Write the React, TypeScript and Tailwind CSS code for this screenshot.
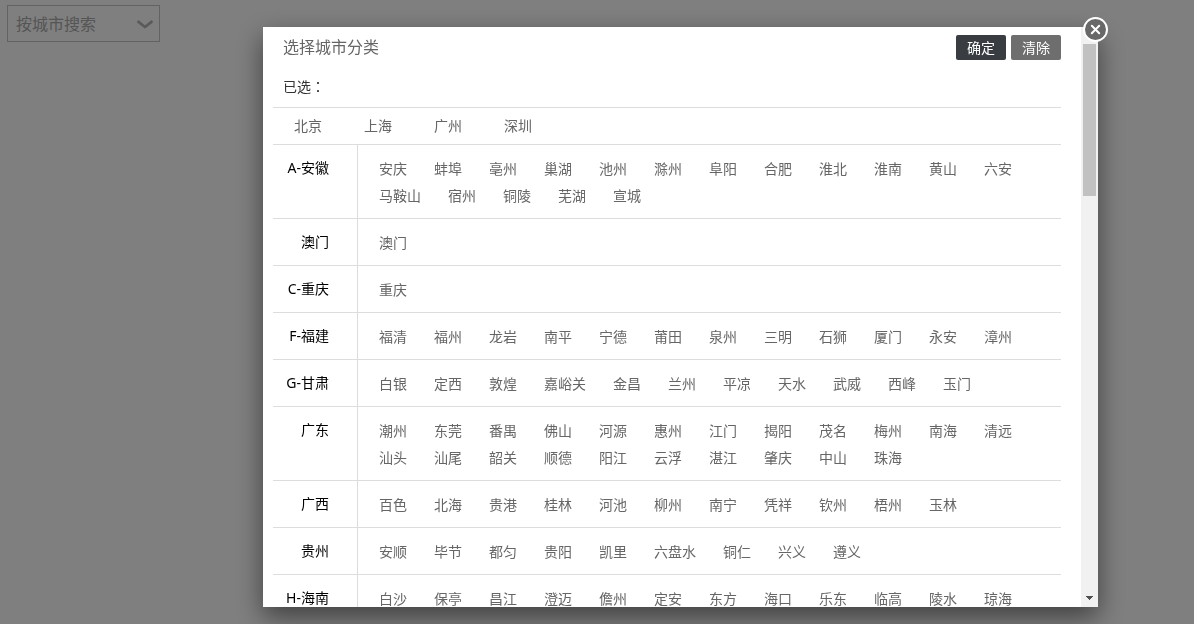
import React from "react";

const hotCities = ["北京", "上海", "广州", "深圳"];

const regions = [
  { name: "A-安徽", cities: ["安庆", "蚌埠", "亳州", "巢湖", "池州", "滁州", "阜阳", "合肥", "淮北", "淮南", "黄山", "六安", "马鞍山", "宿州", "铜陵", "芜湖", "宣城"] },
  { name: "澳门", cities: ["澳门"] },
  { name: "C-重庆", cities: ["重庆"] },
  { name: "F-福建", cities: ["福清", "福州", "龙岩", "南平", "宁德", "莆田", "泉州", "三明", "石狮", "厦门", "永安", "漳州"] },
  { name: "G-甘肃", cities: ["白银", "定西", "敦煌", "嘉峪关", "金昌", "兰州", "平凉", "天水", "武威", "西峰", "玉门"] },
  { name: "广东", cities: ["潮州", "东莞", "番禺", "佛山", "河源", "惠州", "江门", "揭阳", "茂名", "梅州", "南海", "清远", "汕头", "汕尾", "韶关", "顺德", "阳江", "云浮", "湛江", "肇庆", "中山", "珠海"] },
  { name: "广西", cities: ["百色", "北海", "贵港", "桂林", "河池", "柳州", "南宁", "凭祥", "钦州", "梧州", "玉林"] },
  { name: "贵州", cities: ["安顺", "毕节", "都匀", "贵阳", "凯里", "六盘水", "铜仁", "兴义", "遵义"] },
  { name: "H-海南", cities: ["白沙", "保亭", "昌江", "澄迈", "儋州", "定安", "东方", "海口", "乐东", "临高", "陵水", "琼海"] },
];

function CityLink({ name }: { name: string }) {
  return (
    <a href="#" className="text-[#666] hover:text-black">
      {name}
    </a>
  );
}

function CitySelect() {
  return (
    <div className="relative w-[153px]">
      <select
        aria-label="按城市搜索"
        className="block h-[37px] w-full appearance-none border border-[#c4c4c4] bg-white px-2 text-base leading-none text-[#aaa]"
      >
        <option>按城市搜索</option>
      </select>
      <svg
        viewBox="0 0 16 9"
        className="pointer-events-none absolute top-[15px] right-[7px] h-[9px] w-4"
        fill="none"
        stroke="#b4b4b4"
        strokeWidth="2.8"
        strokeLinecap="round"
        strokeLinejoin="round"
      >
        <path d="M1.500 1.800L8 7l6.500-5.200" />
      </svg>
    </div>
  );
}

function Scrollbar() {
  return (
    <div aria-hidden="true" className="flex w-[17px] shrink-0 flex-col justify-between bg-[#f1f1f1] px-0.5 pt-[17px]">
      <div className="h-[27%] bg-[#c1c1c1]" />
      <svg viewBox="0 0 13 17" className="h-[17px] w-[13px]" shapeRendering="crispEdges">
        <path d="M3 6h7v1H9v1H8v1H7v1H6V9H5V8H4V7H3z" fill="#505050" />
      </svg>
    </div>
  );
}

function CityDialog() {
  return (
    <div
      role="dialog"
      aria-labelledby="dialog-title"
      className="relative flex h-full w-full max-w-[835px] bg-white shadow-[0_10px_25px_rgba(0,0,0,0.5)]"
    >
      <div className="min-w-0 flex-1 overflow-y-auto pr-5 pl-2.5 [scrollbar-width:none]">
        <header className="flex items-start justify-between pt-2 pl-2.5">
          <h2 id="dialog-title" className="text-base leading-[25px] text-[#666]">
            选择城市分类
          </h2>
          <div className="flex gap-[5px]">
            <button className="h-[25px] w-[50px] rounded-xs bg-[#393d42] pt-px text-white">确定</button>
            <button className="h-[25px] w-[50px] rounded-xs bg-[#6e6e6e] pt-px text-white">清除</button>
          </div>
        </header>
        <p className="border-b border-[#ddd] pt-[13px] pb-[7px] pl-2.5 leading-[27px] text-[#333]">
          已选<span className="font-['Noto_Sans_CJK_TC',sans-serif]">：</span>
        </p>

        <div className="flex gap-[42px] border-b border-[#ddd] px-[21px] leading-9">
          {hotCities.map((city) => (
            <CityLink key={city} name={city} />
          ))}
        </div>

        <dl>
          {regions.map((region) => (
            <div key={region.name} className="flex border-b border-[#ddd] leading-[27px]">
              <dt className="w-[84px] shrink-0 pt-[9px] pr-7 text-right text-black">{region.name}</dt>
              <dd className="flex flex-1 flex-wrap gap-x-[27px] border-l border-[#ddd] pt-2.5 pb-[9px] pl-[21px]">
                {region.cities.map((city) => (
                  <CityLink key={city} name={city} />
                ))}
              </dd>
            </div>
          ))}
        </dl>
      </div>

      <Scrollbar />

      <button
        aria-label="关闭"
        className="absolute -top-2.5 -right-2.5 flex size-[25px] items-center justify-center rounded-full border-2 border-white bg-[#686868]"
      >
        <svg viewBox="0 0 11 11" className="size-[11px]" stroke="#fff" strokeWidth="2" strokeLinecap="round">
          <path d="M1.800 1.800l7.400 7.400M9.200 1.800l-7.400 7.400" />
        </svg>
      </button>
    </div>
  );
}

export default function App() {
  return (
    <main className="min-h-screen bg-white px-[7px] pt-[5px] font-['Noto_Sans','Noto_Sans_CJK_SC',sans-serif] text-sm">
      <CitySelect />
      <div className="fixed inset-0 flex justify-end bg-black/50 pt-[27px] pr-24 pb-[17px]">
        <CityDialog />
      </div>
    </main>
  );
}
